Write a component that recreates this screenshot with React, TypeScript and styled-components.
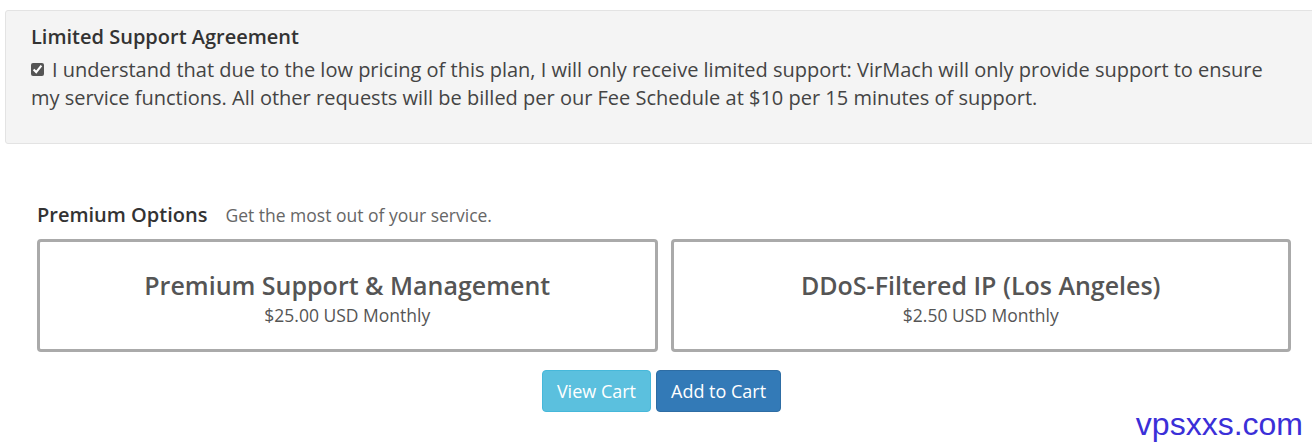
import styled, { createGlobalStyle } from "styled-components";

const GlobalStyle = createGlobalStyle`
  html, body {
    margin: 0;
    padding: 0;
    background: #fff;
    overflow: hidden;
  }
  body {
    font-family: "Open Sans", "Liberation Sans", sans-serif;
    color: #333;
  }
`;

const addons = [
  { name: "Premium Support & Management", price: "$25.00 USD Monthly" },
  { name: "DDoS-Filtered IP (Los Angeles)", price: "$2.50 USD Monthly" },
];

const App = () => {
  return (
    <>
      <GlobalStyle />
      <Page>
        <Agreement>
          <AgreementTitle>Limited Support Agreement</AgreementTitle>
          <AgreementText>
            <Check type="checkbox" defaultChecked />
            I understand that due to the low pricing of this plan, I will only receive limited
            support: VirMach will only provide support to ensure my service functions. All other
            requests will be billed per our Fee Schedule at $10 per 15 minutes of support.
          </AgreementText>
        </Agreement>

        <Options>
          <OptionsHeader>
            <OptionsTitle>Premium Options</OptionsTitle>
            <OptionsSub>Get the most out of your service.</OptionsSub>
          </OptionsHeader>
          <CardGrid>
            {addons.map((addon) => (
              <Card key={addon.name}>
                <CardTitle>{addon.name}</CardTitle>
                <CardPrice>{addon.price}</CardPrice>
              </Card>
            ))}
          </CardGrid>
          <Actions>
            <Button $variant="info">View Cart</Button>
            <Button $variant="primary">Add to Cart</Button>
          </Actions>
        </Options>

        <Watermark>vpsxxs.com</Watermark>
      </Page>
    </>
  );
};

const Page = styled.div`
  position: relative;
  width: 1312px;
  height: 447px;
  padding-top: 10px;
  box-sizing: border-box;
`;

const Agreement = styled.div`
  margin-left: 5px;
  width: 1330px;
  height: 134px;
  box-sizing: border-box;
  background: #f4f4f4;
  border: 1px solid #e3e3e3;
  border-radius: 3px;
  padding: 12px 25px 0;
`;

const AgreementTitle = styled.div`
  font-size: 20px;
  font-weight: 600;
  line-height: 27px;
  margin-bottom: 6px;
  color: #333;
`;

const AgreementText = styled.div`
  width: 1250px;
  font-size: 20px;
  line-height: 28px;
  color: #444;
`;

const Check = styled.input`
  width: 13px;
  height: 13px;
  margin: 0 8px 0 0;
  vertical-align: 1px;
  accent-color: #555;
`;

const Options = styled.div`
  padding: 59px 21px 0 37px;
`;

const OptionsHeader = styled.div`
  display: flex;
  align-items: baseline;
  gap: 18px;
  line-height: 24px;
`;

const OptionsTitle = styled.span`
  font-size: 20px;
  font-weight: 600;
  color: #333;
`;

const OptionsSub = styled.span`
  font-size: 17.5px;
  color: #666;
`;

const CardGrid = styled.div`
  display: grid;
  grid-template-columns: 1fr 1fr;
  gap: 13px;
  margin-top: 12px;
`;

const Card = styled.div`
  height: 113px;
  box-sizing: border-box;
  border: 3px solid #aaa;
  border-radius: 4px;
  display: flex;
  flex-direction: column;
  align-items: center;
  justify-content: center;
  padding-top: 6px;
`;

const CardTitle = styled.div`
  font-size: 25px;
  font-weight: 600;
  line-height: 32px;
  color: #555;
`;

const CardPrice = styled.div`
  font-size: 17.5px;
  line-height: 25px;
  margin-top: 2px;
  color: #555;
`;

const Actions = styled.div`
  display: flex;
  justify-content: center;
  gap: 5px;
  margin-top: 18px;
  padding-right: 5px;
`;

const Button = styled.button<{ $variant: "info" | "primary" }>`
  font-family: "Open Sans", "Liberation Sans", sans-serif;
  font-size: 18px;
  height: 42px;
  padding: 0 14px;
  border-radius: 4px;
  color: #fff;
  cursor: pointer;
  background: ${({ $variant }) => ($variant === "info" ? "#5bc0de" : "#337ab7")};
  border: 1px solid ${({ $variant }) => ($variant === "info" ? "#46b8da" : "#2e6da4")};
`;

const Watermark = styled.div`
  position: absolute;
  right: 9px;
  bottom: 4px;
  font-family: "Liberation Sans", Arial, sans-serif;
  font-size: 32px;
  color: #3b2fd8;
`;

export default App;
